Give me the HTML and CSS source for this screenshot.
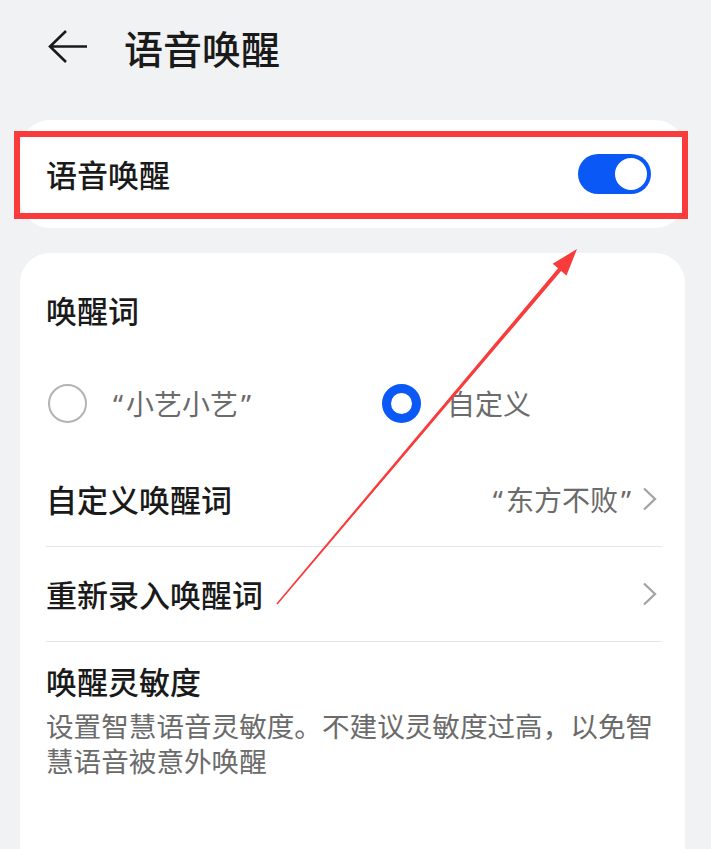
FILE: index.html
```html
<!DOCTYPE html>
<html lang="zh-CN">
<head>
<meta charset="utf-8">
<title>语音唤醒</title>
<link rel="stylesheet" href="styles.css">
</head>
<body>
<div class="page">
  <header class="header">
    <svg class="back" width="40" height="36" viewBox="0 0 40 36">
      <path d="M39 17.5 H2.5 M18 2 L2 17.5 L18 33" fill="none" stroke="#1a1a1a" stroke-width="2.6" stroke-linejoin="miter"/>
    </svg>
    <h1 class="title">语音唤醒</h1>
  </header>

  <section class="card card-top">
    <span class="row-label">语音唤醒</span>
    <div class="switch"><div class="knob"></div></div>
  </section>

  <section class="card card-main">
    <div class="section-title">唤醒词</div>
    <div class="radio-row">
      <div class="option option-first">
        <span class="radio"></span>
        <span class="option-label"><span class="q ql">“</span>小艺小艺<span class="q qr">”</span></span>
      </div>
      <div class="option">
        <span class="radio radio-on"></span>
        <span class="option-label">自定义</span>
      </div>
    </div>
    <div class="list-row">
      <span class="row-label">自定义唤醒词</span>
      <div class="row-right">
        <span class="row-value"><span class="q ql">“</span>东方不败<span class="q qr">”</span></span>
        <svg class="chev" width="15" height="24" viewBox="0 0 15 24"><path d="M2 1.5 L13 12 L2 22.5" fill="none" stroke="#a3a3a3" stroke-width="2.3"/></svg>
      </div>
    </div>
    <div class="list-row">
      <span class="row-label">重新录入唤醒词</span>
      <div class="row-right">
        <svg class="chev" width="15" height="24" viewBox="0 0 15 24"><path d="M2 1.5 L13 12 L2 22.5" fill="none" stroke="#a3a3a3" stroke-width="2.3"/></svg>
      </div>
    </div>
    <div class="sens">
      <div class="row-label">唤醒灵敏度</div>
      <p class="desc">设置智慧语音灵敏度。不建议灵敏度过高，以免智慧语音被意外唤醒</p>
    </div>
  </section>

  <div class="highlight"></div>
  <svg class="annot" width="711" height="849" viewBox="0 0 711 849">
    <polygon points="276.4,603.5 558.1,268.3 552.7,263.8 577,249 566.5,275.4 561.1,270.9 277.6,604.5" fill="#f93b3b"/>
  </svg>
</div>
</body>
</html>
```
FILE: styles.css
```css
* { box-sizing: border-box; }
html, body { margin: 0; padding: 0; }
body {
  background: #f1f2f4;
  font-family: "Noto Sans CJK SC", "Noto Sans", sans-serif;
  color: #1a1a1a;
}
.page {
  position: relative;
  width: 711px;
  height: 849px;
  overflow: hidden;
  display: flex;
  flex-direction: column;
}
.header {
  height: 94px;
  display: flex;
  align-items: center;
  padding-left: 48px;
  flex-shrink: 0;
}
.back { display: block; margin-right: 36px; }
.title {
  margin: 0;
  font-size: 39px;
  font-weight: 500;
  line-height: 44px;
  letter-spacing: 0;
}
.card {
  background: #fff;
  margin-left: 20px;
  width: 665px;
}
.card-top {
  margin-top: 26px;
  height: 108px;
  border-radius: 30px;
  display: flex;
  align-items: center;
  justify-content: space-between;
  padding: 0 34px 0 26px;
  flex-shrink: 0;
}
.row-label {
  font-size: 31px;
  font-weight: 500;
  line-height: 36px;
  color: #1a1a1a;
}
.switch {
  width: 73px;
  height: 40px;
  border-radius: 20px;
  background: #0a59f7;
  display: flex;
  justify-content: flex-end;
  align-items: center;
  padding-right: 2px;
}
.knob {
  width: 36px;
  height: 36px;
  border-radius: 50%;
  background: #fff;
  border: 2px solid #0a59f7;
}
.card-main {
  margin-top: 25px;
  flex: 1;
  border-radius: 30px 30px 0 0;
  padding: 39px 23px 0 26px;
}
.section-title {
  font-size: 31px;
  font-weight: 500;
  line-height: 36px;
}
.radio-row {
  display: flex;
  align-items: center;
  margin-top: 55px;
  height: 40px;
  margin-bottom: 29px;
}
.option {
  display: flex;
  align-items: center;
  gap: 26px;
  padding-left: 2px;
}
.option-first { width: 334px; }
.radio {
  width: 39px;
  height: 39px;
  border-radius: 50%;
  border: 2px solid #b3b3b3;
  flex-shrink: 0;
}
.radio-on { border: 9.5px solid #0a59f7; }
.option-label {
  font-size: 28px;
  line-height: 36px;
  color: #6b6b6b;
}
.q { font-family: "Noto Sans", "Liberation Sans", sans-serif; }
.ql { padding-right: 3px; }
.qr { padding-left: 3px; }
.list-row {
  height: 95px;
  border-bottom: 1px solid #e6e6e6;
  display: flex;
  align-items: center;
  justify-content: space-between;
  padding-right: 5px;
}
.row-right {
  display: flex;
  align-items: center;
  gap: 11px;
}
.row-value {
  font-size: 28px;
  line-height: 36px;
  color: #6b6b6b;
}
.chev { display: block; }
.sens { padding-top: 21px; }
.desc {
  margin: 9px 0 0;
  font-size: 27.6px;
  line-height: 35px;
  color: #6b6b6b;
}
.highlight {
  position: absolute;
  left: 14px;
  top: 131px;
  width: 674px;
  height: 88px;
  border: 6px solid #f93b3b;
}
.annot {
  position: absolute;
  left: 0;
  top: 0;
  pointer-events: none;
}
```
